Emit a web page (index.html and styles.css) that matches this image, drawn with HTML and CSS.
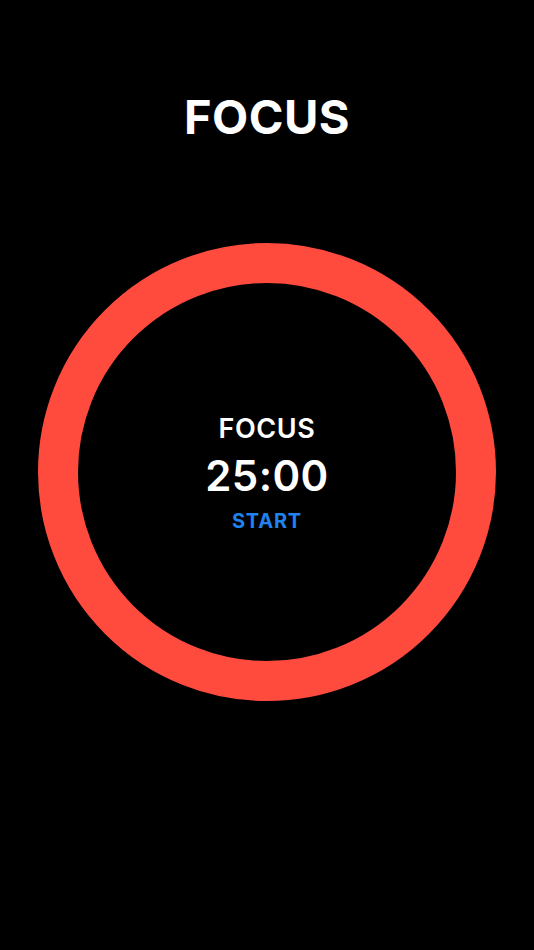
FILE: index.html
```html
<!DOCTYPE html>
<html lang="en">
<head>
<meta charset="utf-8">
<title>Focus</title>
<link rel="stylesheet" href="styles.css">
</head>
<body>
<main class="app">
  <h1 class="title">FOCUS</h1>
  <div class="ring">
    <div class="ring-content">
      <div class="mode">FOCUS</div>
      <div class="time">25:00</div>
      <button class="start">START</button>
    </div>
  </div>
</main>
</body>
</html>
```

FILE: styles.css
```css
html, body {
  margin: 0;
  padding: 0;
  background: #000;
  height: 100%;
}
.app {
  display: flex;
  flex-direction: column;
  align-items: center;
  font-family: Inter, "Noto Sans", sans-serif;
  color: #fff;
}
.title {
  margin: 88px 0 0;
  font-size: 47px;
  font-weight: 700;
  line-height: 58px;
  letter-spacing: 0.5px;
}
.ring {
  margin-top: 97px;
  width: 378px;
  height: 378px;
  border: 40px solid #ff4a3e;
  border-radius: 50%;
  display: flex;
  align-items: center;
  justify-content: center;
}
.ring-content {
  display: flex;
  flex-direction: column;
  align-items: center;
  padding-top: 3px;
}
.mode {
  font-size: 27px;
  font-weight: 600;
  line-height: 44px;
  letter-spacing: 0.6px;
}
.time {
  font-size: 42px;
  font-weight: 600;
  line-height: 50px;
  letter-spacing: 0.4px;
}
.start {
  background: none;
  border: 0;
  padding: 0;
  font-family: inherit;
  font-size: 20px;
  font-weight: 700;
  line-height: 40px;
  letter-spacing: 0.8px;
  color: #1f82ee;
}
```
